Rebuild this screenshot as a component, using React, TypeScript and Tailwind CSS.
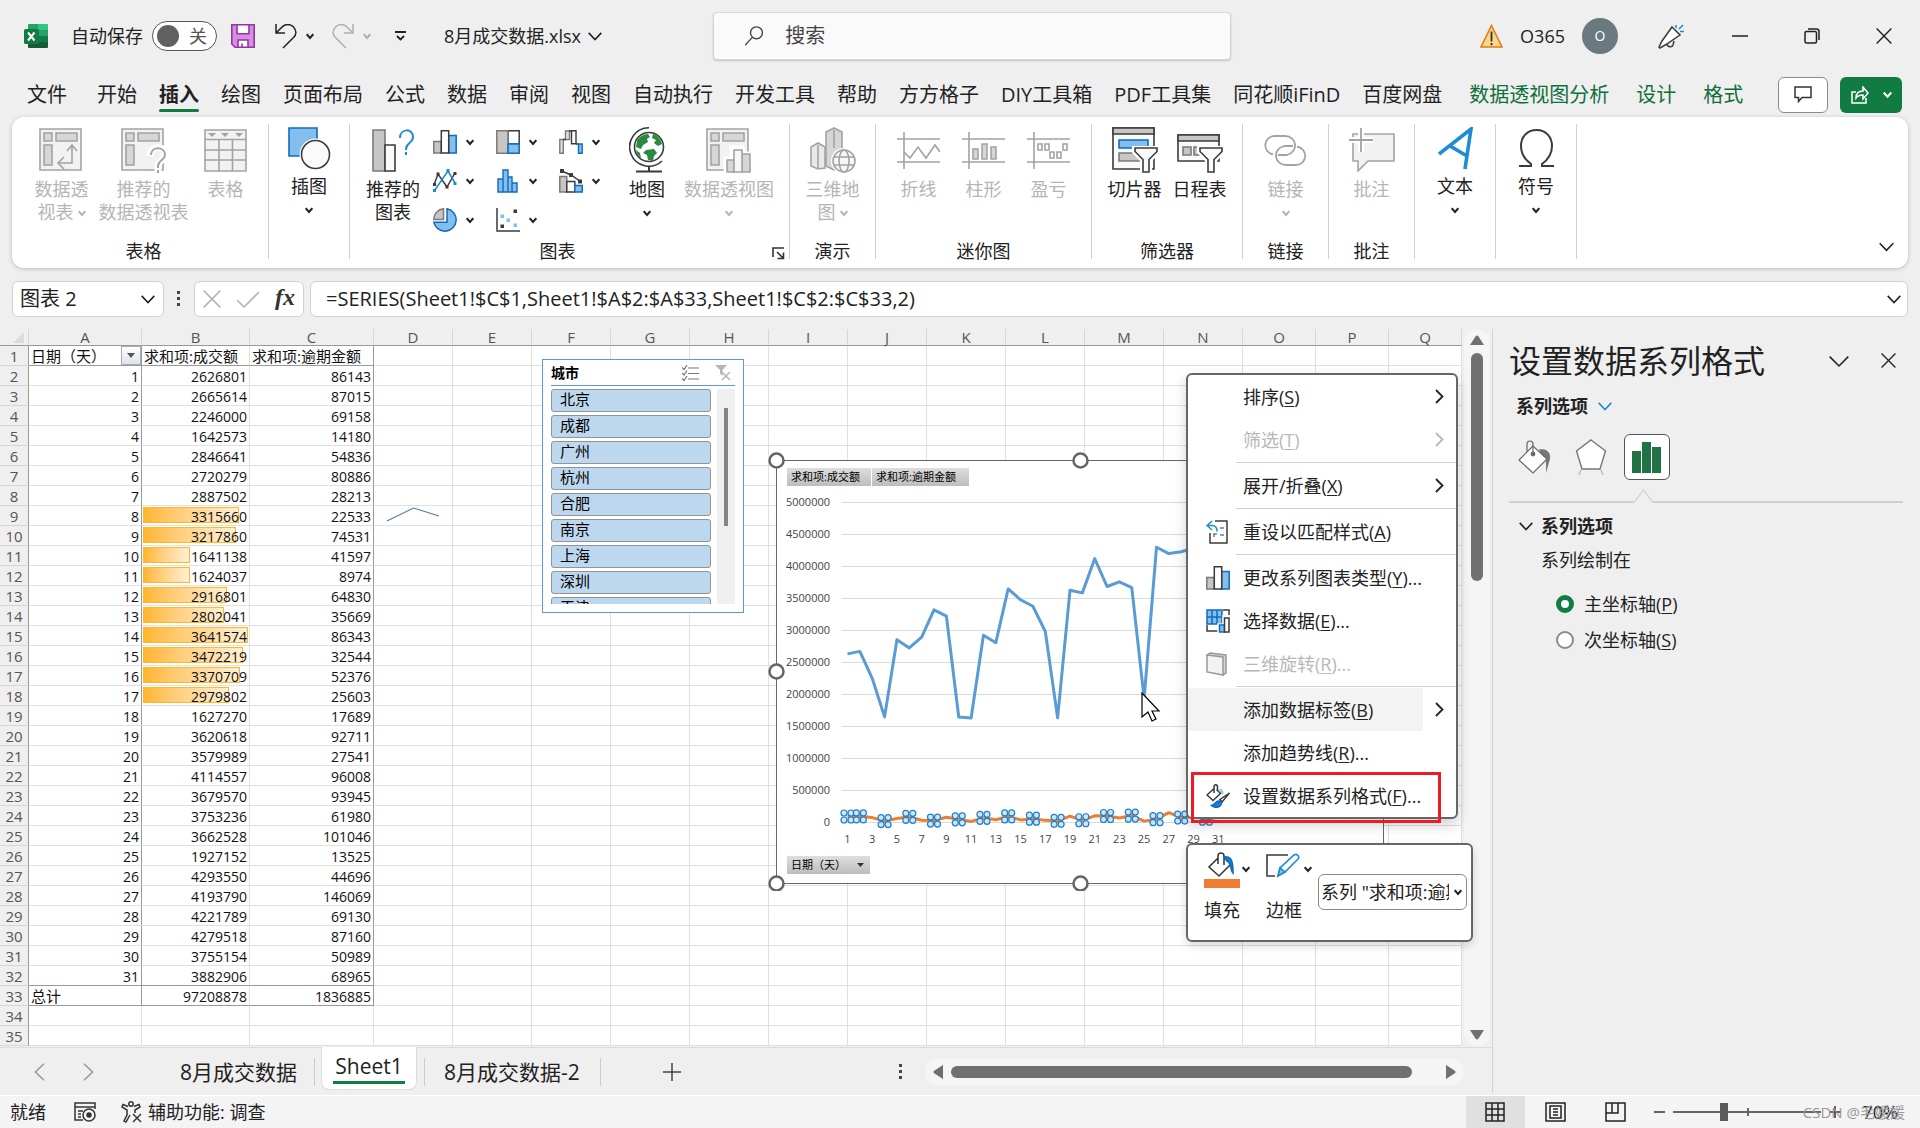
import { useState, type ReactNode } from "react";

const DEALS = [
  2626801, 2665614, 2246000, 1642573, 2846641, 2720279, 2887502, 3315660, 3217860, 1641138, 1624037,
  2916801, 2802041, 3641574, 3472219, 3370709, 2979802, 1627270, 3620618, 3579989, 4114557, 3679570,
  3753236, 3662528, 1927152, 4293550, 4193790, 4221789, 4279518, 3755154, 3882906,
];

const OVERDUE = [
  86143, 87015, 69158, 14180, 54836, 80886, 28213, 22533, 74531, 41597, 8974, 64830, 35669, 86343,
  32544, 52376, 25603, 17689, 92711, 27541, 96008, 93945, 61980, 101046, 13525, 44696, 146069, 69130,
  87160, 50989, 68965,
];

const COLUMNS = "ABCDEFGHIJKLMNOPQ".split("");
const CITIES = ["北京", "成都", "广州", "杭州", "合肥", "南京", "上海", "深圳", "天津"];

const TABS = [
  "文件", "开始", "插入", "绘图", "页面布局", "公式", "数据", "审阅", "视图", "自动执行", "开发工具",
  "帮助", "方方格子", "DIY工具箱", "PDF工具集", "同花顺iFinD", "百度网盘",
];
const CONTEXT_TABS = ["数据透视图分析", "设计", "格式"];

/* ---------- small shared icons ---------- */

function Chevron({ size = 8, className = "", width = 2 }: { size?: number; className?: string; width?: number }) {
  return (
    <svg
      width={size}
      height={size}
      viewBox={`0 0 ${size} ${size}`}
      fill="none"
      stroke="currentColor"
      strokeWidth={width}
      className={`shrink-0 ${className}`}
    >
      <path d={`M.7 ${size * 0.28} L${size / 2} ${size * 0.75} L${size - 0.7} ${size * 0.28}`} />
    </svg>
  );
}

function Cross({ size = 16, width = 1.4, className = "" }: { size?: number; width?: number; className?: string }) {
  return (
    <svg width={size} height={size} viewBox="0 0 16 16" stroke="currentColor" strokeWidth={width} className={className}>
      <path d="M.6.6 15.4 15.4M15.4.6.6 15.4" />
    </svg>
  );
}

function Dots() {
  return (
    <svg width="4" height="16" viewBox="0 0 4 16" fill="#444">
      <path d="M0 0h3v3H0zM0 6h3v3H0zM0 12h3v3H0z" />
    </svg>
  );
}

function ExcelLogo() {
  return (
    <svg width="24" height="24" viewBox="0 0 24 24">
      <path d="M5 0h10v6H4V1a1 1 0 0 1 1-1z" fill="#21a366" />
      <path d="M14 0h9a1 1 0 0 1 1 1v5H14z" fill="#33c481" />
      <path d="M4 6h10v6H4z" fill="#107c41" />
      <path d="M14 6h10v6H14z" fill="#21a366" />
      <path d="M4 12h10v12H5a1 1 0 0 1-1-1z" fill="#185c37" />
      <path d="M14 12h10v6H14z" fill="#107c41" />
      <path d="M14 18h10v5a1 1 0 0 1-1 1h-9z" fill="#185c37" />
      <rect x="0" y="5" width="15" height="15" rx="1.5" fill="#107c41" />
      <path d="M4 8.5 10.5 16.5M10.5 8.5 4 16.5" stroke="#fff" strokeWidth="2" />
    </svg>
  );
}

function SaveIcon() {
  return (
    <svg width="24" height="24" viewBox="0 0 24 24" stroke="#9b2fae" strokeWidth="1.6">
      <path d="M.8.8h22.4v22.4H4L.8 20z" fill="#d291dc" />
      <path d="M6 .8h12v9H6z" fill="#fff" />
      <path d="M7 23.2V16h10v7.2z" fill="#fff" />
      <path d="M11 19.5v3.7" />
    </svg>
  );
}

function UndoIcon({ flip = false }: { flip?: boolean }) {
  return (
    <svg width="22" height="25" viewBox="0 0 22 25" fill="none" stroke="currentColor" strokeWidth="1.5">
      {flip ? (
        <path d="M21 0v9h-9M21 9 15.5 3.5C12-.5 6.5-.2 3.5 3s-3.3 7.5 0 10.5L14 24" />
      ) : (
        <path d="M1 0v9h9M1 9l5.5-5.5C10-.5 15.5-.2 18.5 3s3.3 7.5 0 10.5L8 24" />
      )}
    </svg>
  );
}

/* ---------- ribbon drawings ---------- */

const G = "#a3a3a3";

function PivotIcon({ kind }: { kind: "arrow" | "ask" | "bars" }) {
  return (
    <svg width="46" height="45" viewBox="0 0 46 45" fill="none" stroke={G} strokeWidth="1.6">
      <path d="M1 1h41v41H1z" fill="#f2f2f2" />
      <path d="M5 5h8v8H5zM17 5h21v8H17zM5 17h8v20H5z" fill="#d6d6d6" />
      {kind === "arrow" && <path d="M33 18v17H20M28 23l5-6 5 6M25 29l-6 6 6 6" />}
      {kind === "ask" && (
        <>
          <path d="M29 28c1-12 17-10 15 0-1 4-7 5-7 10v6" stroke="#fff" strokeWidth="7" />
          <path d="M30 27c0-9 14-9 14 0 0 5-7 5-7 11v2M37 42v3" strokeWidth="2" />
        </>
      )}
      {kind === "bars" && (
        <>
          <path d="M19 44V30h6V19h12v6h9v20z" fill="#fff" stroke="#fff" strokeWidth="3" />
          <path d="M21 32h7v12h-7zM36 26h8v18h-8z" fill="#d6d6d6" />
          <path d="M28 22h8v22h-8z" fill="#f7f7f7" />
        </>
      )}
    </svg>
  );
}

function TableIcon() {
  return (
    <svg width="43" height="43" viewBox="0 0 43 43" fill="none" stroke={G} strokeWidth="1.6">
      <path d="M1 1h41v41H1z" fill="#f2f2f2" />
      <path d="M1 10.5h41M1 21h41M1 31h41M15 10v32M28.5 10v32" />
      <path d="M4 4h8l-4 4zM17 4h8l-4 4zM31 4h8l-4 4z" fill={G} stroke="none" />
    </svg>
  );
}

function ShapesIcon() {
  return (
    <svg width="43" height="43" viewBox="0 0 43 43" strokeWidth="1.6">
      <path d="M1 1h28v28H1z" fill="#83beec" stroke="#0f6cbd" />
      <circle cx="27.5" cy="27.5" r="16" fill="#fff" />
      <circle cx="27.5" cy="27.5" r="14" fill="#fafafa" stroke="#3b3b3b" />
    </svg>
  );
}

function SuggestChartIcon() {
  return (
    <svg width="43" height="43" viewBox="0 0 43 43" fill="none" strokeWidth="1.6">
      <path d="M1 1h12v41H1z" fill="#c8c6c4" stroke="#7a7a7a" />
      <path d="M13 16h10v26H13z" fill="#fafafa" stroke="#3b3b3b" />
      <path d="M28 9c0-10 13-10 13-1 0 6-7 6-7 12v1M34 23v3" stroke="#1e8bd4" strokeWidth="2" />
    </svg>
  );
}

function ColumnMini() {
  return (
    <svg width="24" height="24" viewBox="0 0 24 24" strokeWidth="1.5">
      <path d="M.8 11.5h7.5V23H.8z" fill="#c8c6c4" stroke="#7a7a7a" />
      <path d="M15.5 5.5h7.7V23h-7.7z" fill="#83beec" stroke="#0f6cbd" />
      <path d="M8.3.8h7.4V23H8.3z" fill="#fff" stroke="#3b3b3b" />
    </svg>
  );
}

const MINI_CHARTS: { name: string; icon: ReactNode }[] = [
  { name: "柱形图", icon: <ColumnMini /> },
  {
    name: "层次结构图",
    icon: (
      <svg width="24" height="24" viewBox="0 0 24 24" strokeWidth="1.5">
        <path d="M12 .8h11.2V14H12z" fill="#fff" stroke="#3b3b3b" />
        <path d="M.8.8H12v22.4H.8z" fill="#c8c6c4" stroke="#7a7a7a" />
        <path d="M12 14h11.2v9.2H12z" fill="#83beec" stroke="#0f6cbd" />
      </svg>
    ),
  },
  {
    name: "瀑布图",
    icon: (
      <svg width="24" height="24" viewBox="0 0 24 24" strokeWidth="1.4">
        <path d="M.8 9.5h3.5v13.7H.8zM6.5 1h4v8.5h-4z" fill="#e4e2e0" stroke="#7a7a7a" />
        <path d="M12.500 .8h4.500v13h-4.500z" fill="#fff" stroke="#3b3b3b" />
        <path d="M4 9.500h3M10 1h3M17 14h3" stroke="#3b3b3b" />
        <path d="M19.5 14h3.7v9.2h-3.7z" fill="#83beec" stroke="#0f6cbd" />
      </svg>
    ),
  },
  {
    name: "折线图",
    icon: (
      <svg width="24" height="24" viewBox="0 0 24 24" fill="none" strokeWidth="1.5">
        <path d="M1 16 5 5l9 13 8-14" stroke="#3b3b3b" />
        <path d="M1.5 21.5 15 2l7 12" stroke="#1e8bd4" />
        <path d="M0 14h3v3H0zM3.5 3.5h3v3h-3zM12.5 16.5h3v3h-3zM20.5 3h3v3h-3z" fill="#3b3b3b" />
        <path d="M0 20h3v3H0zM13.5 0h3v3h-3zM20.5 13h3v3h-3z" fill="#1e8bd4" />
      </svg>
    ),
  },
  {
    name: "统计图",
    icon: (
      <svg width="24" height="24" viewBox="0 0 24 24" fill="#83beec" stroke="#0f6cbd" strokeWidth="1.4">
        <path d="M2 10h5v13H2zM7 1h5v22H7zM12 8h4v15h-4zM16 14h5v9h-5z" />
      </svg>
    ),
  },
  {
    name: "组合图",
    icon: (
      <svg width="24" height="24" viewBox="0 0 24 24" strokeWidth="1.5">
        <path d="M.8 7.5h7V23h-7z" fill="#c8c6c4" stroke="#7a7a7a" />
        <path d="M7.8 12.5h8V23h-8z" fill="#fff" stroke="#3b3b3b" />
        <path d="M15.8 16.5h7.4V23h-7.4z" fill="#83beec" stroke="#0f6cbd" />
        <path d="M2.5 2 12 6l9.5 6.5" fill="none" stroke="#3b3b3b" />
        <path d="M1 0h4v4H1zM10 4h4v4h-4zM19 10.5h4v4h-4z" fill="#3b3b3b" />
      </svg>
    ),
  },
  {
    name: "饼图",
    icon: (
      <svg width="24" height="24" viewBox="0 0 24 24" strokeWidth="1.5">
        <path d="M10.5.8v10.7H.8A10.5 10.5 0 0 1 10.5.8z" fill="#c8c6c4" stroke="#7a7a7a" />
        <path d="M14 .8a11.3 11.3 0 1 1-13.2 13.4H14z" fill="#83beec" stroke="#0f6cbd" />
      </svg>
    ),
  },
  {
    name: "散点图",
    icon: (
      <svg width="24" height="24" viewBox="0 0 24 24">
        <path d="M1 0v23h23" fill="none" stroke="#3b3b3b" strokeWidth="1.5" />
        <path d="M17.5 1.5H21V5h-3.5zM4.5 16.5H8V20H4.500z" fill="#3b3b3b" />
        <path d="M4.5 6.500H8V10H4.5zM10.5 10.500H14V14h-3.500zM17.5 15.500H21V19h-3.500z" fill="#83beec" />
      </svg>
    ),
  },
];

function GlobeIcon() {
  return (
    <svg width="36" height="46" viewBox="0 0 36 46" fill="none" stroke="#3b3b3b" strokeWidth="1.6">
      <circle cx="20" cy="20" r="14.5" fill="#fff" />
      <path d="M20 .8A19.2 19.2 0 1 0 33 34" />
      <path d="M20 39v5M7 44.5h26" strokeWidth="2" />
      <g fill="#2b8a3e" stroke="none">
        <path d="M8 14c2-4 6-7 11-7l2 3-3 2 1 3-5 3-2 4-5-2z" />
        <path d="M24 7c4 1 8 5 9 10l-4 2-4-3 2-3-4-2z" />
        <path d="M17 23l8-1 3 4-3 3-1 5-5-1-1-5-4-2z" />
        <path d="M7 23l4 3 1 5c-3-2-5-5-5-8z" />
      </g>
    </svg>
  );
}

function Map3dIcon() {
  return (
    <svg width="46" height="46" viewBox="0 0 46 46" stroke={G} strokeWidth="1.6">
      <path d="M16 5l8-4 8 4v36l-8 2-8-4z" fill="#d6d6d6" />
      <path d="M1 20l7-4 7 4v21l-7 1-7-3z" fill="#e8e8e8" />
      <path d="M8 18v23M24 3v18" />
      <circle cx="34" cy="34" r="13" fill="#fff" stroke="none" />
      <circle cx="34" cy="34" r="11" fill="#f7f7f7" />
      <ellipse cx="34" cy="34" rx="5" ry="11" fill="none" />
      <path d="M24 30h20M24 38h20" />
    </svg>
  );
}

function SparkIcon({ kind }: { kind: "line" | "column" | "winloss" }) {
  return (
    <svg width="43" height="37" viewBox="0 0 43 37" fill="none" stroke={G} strokeWidth="1.6">
      <path d="M0 7h43M0 30h43M7 0v37" />
      {kind === "line" && <path d="M7 20l6 6 8-11 8 11 9-13 5 7" />}
      {kind === "column" && <path d="M11 17h5v10h-5zM20 12h5v15h-5zM29 15h5v12h-5z" fill="#d6d6d6" />}
      {kind === "winloss" && <path d="M11 12h4v6h-4zM18 12h4v6h-4zM36 12h4v6h-4zM23 20h4v6h-4zM30 20h4v6h-4z" />}
    </svg>
  );
}

function Funnel({ x, y }: { x: number; y: number }) {
  return (
    <g transform={`translate(${x} ${y})`}>
      <path d="M0 0h24v4l-8 8v13H8V12L0 4z" fill="#fff" stroke="#fff" strokeWidth="4" />
      <path d="M1 0h22v3.5l-8 8V24H9V11.5l-8-8z" fill="#fafafa" stroke="#3b3b3b" strokeWidth="1.6" />
    </g>
  );
}

function SlicerIcon() {
  return (
    <svg width="46" height="46" viewBox="0 0 46 46" strokeWidth="1.6">
      <path d="M1 1h41v41H1z" fill="#fafafa" stroke="#3b3b3b" />
      <path d="M1 1h41v6H1z" fill="#c8c6c4" stroke="#3b3b3b" />
      <path d="M7 13h29v8H7z" fill="#83beec" stroke="#0f6cbd" />
      <path d="M7 26h22v8H7z" fill="#c8c6c4" stroke="#7a7a7a" />
      <Funnel x={22} y={21} />
    </svg>
  );
}

function TimelineIcon() {
  return (
    <svg width="46" height="46" viewBox="0 0 46 46" strokeWidth="1.6">
      <path d="M1 8h41v26H1z" fill="#fafafa" stroke="#3b3b3b" />
      <path d="M1 8h41v6H1z" fill="#c8c6c4" stroke="#3b3b3b" />
      <path d="M6 20h8v8H6zM17 20h8v8h-8zM28 20h8v8h-8z" fill="#c8c6c4" stroke="#7a7a7a" />
      <Funnel x={22} y={21} />
    </svg>
  );
}

function LinkIcon() {
  return (
    <svg width="43" height="31" viewBox="0 0 43 31" fill="none" stroke={G} strokeWidth="1.8">
      <path d="M9 19.500C-2 17-1 1 11 1h10c12 0 14 16 2 19H14" />
      <path d="M33 11.500C45 14 43 30 32 30H22c-12 0-14-16-2-19h9" />
    </svg>
  );
}

function NoteIcon() {
  return (
    <svg width="46" height="44" viewBox="0 0 46 44" fill="none" stroke={G} strokeWidth="1.6">
      <path d="M4 6h41v27H19L9 43V33H4z" fill="#f2f2f2" />
      <path d="M0 12h24M12 0v24" stroke="#fff" strokeWidth="6" />
      <path d="M0 12h24M12 0v24" strokeWidth="1.8" />
    </svg>
  );
}

function LetterArtIcon() {
  return (
    <svg width="35" height="43" viewBox="0 0 35 43" fill="none" stroke="#1e8bd4" strokeWidth="3.6">
      <path d="M1 27 33 2 27 42M12 19l17 10" />
    </svg>
  );
}

function OmegaIcon() {
  return (
    <svg width="35" height="39" viewBox="0 0 35 39" fill="none" stroke="#3b3b3b" strokeWidth="2">
      <path d="M0 37h12v-2C5 30 2 24 2 17 2 8 8 1 17.5 1S33 8 33 17c0 7-3 13-10 18v2h12" />
    </svg>
  );
}

/* ---------- ribbon ---------- */

interface BigButtonProps {
  icon: ReactNode;
  lines: string[];
  width?: string;
  disabled?: boolean;
  arrow?: "below" | "inline";
  short?: boolean;
}

function BigButton({ icon, lines, width = "w-[65px]", disabled, arrow, short }: BigButtonProps) {
  return (
    <button
      disabled={disabled}
      className={`flex shrink-0 flex-col items-center ${width} ${disabled ? "text-[#b5b5b5]" : "text-[#222]"}`}
    >
      <span className={`flex items-center justify-center ${short ? "h-[53px]" : "h-14"}`}>{icon}</span>
      {lines.map((line, i) => (
        <span key={line} className="flex items-center gap-1 text-lg/[23px] whitespace-nowrap">
          {line}
          {arrow === "inline" && i === lines.length - 1 && <Chevron />}
        </span>
      ))}
      {arrow === "below" && <Chevron className="mt-2" />}
    </button>
  );
}

function Group({ label, width, children, launcher }: { label?: string; width: string; children: ReactNode; launcher?: boolean }) {
  return (
    <>
      <div className={`relative flex shrink-0 flex-col ${width}`}>
        <div className="flex flex-1 items-start justify-center pt-[5px]">{children}</div>
        {label && <div className={`pb-[5px] text-center text-lg/[24px] ${launcher ? "pr-6" : ""}`}>{label}</div>}
        {launcher && (
          <button aria-label="图表设置" className="absolute right-1 bottom-2">
            <svg width="13" height="13" viewBox="0 0 13 13" fill="none" stroke="#333" strokeWidth="1.6">
              <path d="M1 10V1h11M5 5l6 6M11.5 5.500v6h-6" />
            </svg>
          </button>
        )}
      </div>
      <div className="mt-[7px] mb-[9px] w-px shrink-0 bg-[#d1d1d1]" />
    </>
  );
}

function Ribbon() {
  return (
    <div className="relative mx-3 flex h-[151px] rounded-xl bg-white shadow-[0_1px_4px_rgba(0,0,0,0.22)]">
      <Group label="表格" width="w-[256px] pl-[7px]">
        <BigButton width="w-[82px]" icon={<PivotIcon kind="arrow" />} lines={["数据透", "视表"]} arrow="inline" disabled />
        <BigButton width="w-[82px]" icon={<PivotIcon kind="ask" />} lines={["推荐的", "数据透视表"]} disabled />
        <BigButton width="w-[82px]" icon={<TableIcon />} lines={["表格"]} disabled />
      </Group>
      <Group width="w-[80px]">
        <BigButton icon={<ShapesIcon />} lines={["插图"]} arrow="below" short />
      </Group>
      <Group label="图表" width="w-[439px]" launcher>
        <BigButton width="w-[80px]" icon={<SuggestChartIcon />} lines={["推荐的", "图表"]} />
        <div className="grid grid-cols-[63px_63px_63px]">
          {MINI_CHARTS.map((c) => (
            <button key={c.name} aria-label={c.name} className="flex h-[39px] items-center gap-[9px]">
              {c.icon}
              <Chevron />
            </button>
          ))}
        </div>
        <BigButton width="w-[50px]" icon={<GlobeIcon />} lines={["地图"]} arrow="below" />
        <BigButton width="w-[114px]" icon={<PivotIcon kind="bars" />} lines={["数据透视图"]} arrow="below" disabled />
      </Group>
      <Group label="演示" width="w-[85px]">
        <BigButton icon={<Map3dIcon />} lines={["三维地", "图"]} arrow="inline" disabled />
      </Group>
      <Group label="迷你图" width="w-[215px]">
        <BigButton icon={<SparkIcon kind="line" />} lines={["折线"]} disabled />
        <BigButton icon={<SparkIcon kind="column" />} lines={["柱形"]} disabled />
        <BigButton icon={<SparkIcon kind="winloss" />} lines={["盈亏"]} disabled />
      </Group>
      <Group label="筛选器" width="w-[150px]">
        <BigButton icon={<SlicerIcon />} lines={["切片器"]} />
        <BigButton icon={<TimelineIcon />} lines={["日程表"]} />
      </Group>
      <Group label="链接" width="w-[85px]">
        <BigButton icon={<LinkIcon />} lines={["链接"]} arrow="below" disabled />
      </Group>
      <Group label="批注" width="w-[85px]">
        <BigButton icon={<NoteIcon />} lines={["批注"]} disabled />
      </Group>
      <Group width="w-[80px]">
        <BigButton icon={<LetterArtIcon />} lines={["文本"]} arrow="below" short />
      </Group>
      <Group width="w-[80px]">
        <BigButton icon={<OmegaIcon />} lines={["符号"]} arrow="below" short />
      </Group>
      <button aria-label="折叠功能区" className="mt-auto mr-[14px] mb-[14px] ml-auto">
        <Chevron size={15} width={1.6} />
      </button>
    </div>
  );
}

/* ---------- title bar and tabs ---------- */

function TitleBar() {
  const [autosave, setAutosave] = useState(false);
  return (
    <header className="relative flex h-[72px] items-center pl-6 text-lg">
      <ExcelLogo />
      <span className="ml-[23px]">自动保存</span>
      <button
        role="switch"
        aria-checked={autosave}
        aria-label="自动保存"
        onClick={() => setAutosave(!autosave)}
        className="ml-[9px] flex h-[30px] w-[65px] items-center gap-[10px] rounded-full border border-[#555] bg-white pl-1"
      >
        <span className="h-[22px] w-[22px] rounded-full bg-[#616161]" />
        <span className="text-[#555]">关</span>
      </button>
      <button aria-label="保存" className="ml-[14px]"><SaveIcon /></button>
      <button aria-label="撤消" className="ml-5 flex items-center gap-[9px]">
        <UndoIcon />
        <Chevron />
      </button>
      <button aria-label="恢复" disabled className="ml-[18px] flex items-center gap-[9px] text-[#b0b0b0]">
        <UndoIcon flip />
        <Chevron />
      </button>
      <button aria-label="自定义快速访问工具栏" className="ml-6">
        <svg width="11" height="10" viewBox="0 0 11 10" fill="none" stroke="#222" strokeWidth="1.8">
          <path d="M0 1h11M2 5l3.5 3.5L9 5" />
        </svg>
      </button>
      <button className="ml-[38px] flex items-center gap-[7px]">
        8月成交数据.xlsx
        <Chevron size={14} width={1.6} />
      </button>

      {/* Search sits over the middle of the bar */}
      <label className="absolute top-3 left-[37.135%] flex h-12 w-[27%] items-center gap-[22px] rounded border border-[#d6d6d6] bg-[#fafafa] pl-[31px] shadow-[0_1px_2px_rgba(0,0,0,0.2)]">
        <svg width="20" height="22" viewBox="0 0 20 22" fill="none" stroke="#444" strokeWidth="1.5">
          <circle cx="12.5" cy="7.5" r="6.5" />
          <path d="M8 12.5 0 21" />
        </svg>
        <input placeholder="搜索" aria-label="搜索" className="w-full bg-transparent text-xl outline-none placeholder:text-[#444]" />
      </label>

      <div className="ml-auto flex items-center pr-7">
        <svg width="23" height="24" viewBox="0 0 23 24">
          <path d="M11.5 1.5 22 23H1z" fill="#fbd78b" stroke="#e07c1a" strokeWidth="1.6" />
          <path d="M11.5 7.5v10M11.5 19v2.2" stroke="#333" strokeWidth="1.8" />
        </svg>
        <span className="ml-[17px]">O365</span>
        <button aria-label="帐户" className="ml-[17px] h-9 w-9 rounded-full bg-[#69797e] text-sm text-white">O</button>
        <button aria-label="新增功能" className="ml-10">
          <svg width="26" height="25" viewBox="0 0 26 25" fill="none" stroke="#3b3b3b" strokeWidth="1.5">
            <path d="M14 3l8 8-14 9.5L2 24l-1-1 3-6z" fill="#fff" />
            <path d="M9 20c0 3 5 4 6 1l1-4" />
            <path d="M18 1v3M25 1l-4 4M22 7.5h4" stroke="#1e8bd4" />
          </svg>
        </button>
        <button aria-label="最小化" className="ml-12">
          <svg width="16" height="14" viewBox="0 0 16 14"><path d="M0 7h16" stroke="#222" strokeWidth="1.5" /></svg>
        </button>
        <button aria-label="还原" className="ml-[56px]">
          <svg width="16" height="16" viewBox="0 0 16 16" fill="none" stroke="#222" strokeWidth="1.5">
            <rect x="1" y="3.500" width="11.500" height="11.500" rx="1.5" />
            <path d="M4 1h8.500Q15 1 15 3.500V12" />
          </svg>
        </button>
        <button aria-label="关闭" className="ml-[56px]"><Cross /></button>
      </div>
    </header>
  );
}

function TabRow() {
  const [active, setActive] = useState("插入");
  return (
    <nav className="flex h-[45px] items-center pr-[18px] pl-[27px] text-xl">
      <div className="flex gap-[22px]">
        {TABS.map((t) => (
          <button
            key={t}
            onClick={() => setActive(t)}
            className={`relative h-[45px] whitespace-nowrap first:mr-2 ${active === t ? "font-bold" : ""}`}
          >
            {t}
            {active === t && <span className="absolute right-0 bottom-[5px] left-0 h-[3px] rounded-full bg-[#107c41]" />}
          </button>
        ))}
      </div>
      <div className="ml-[27px] flex gap-[27px] text-[#0e703a]">
        {CONTEXT_TABS.map((t) => (
          <button key={t} onClick={() => setActive(t)} className="whitespace-nowrap">{t}</button>
        ))}
      </div>
      <button aria-label="批注" className="ml-auto flex h-9 w-[50px] items-center justify-center rounded-md border border-[#8a8a8a] bg-white">
        <svg width="18" height="17" viewBox="0 0 18 17" fill="none" stroke="#333" strokeWidth="1.5">
          <path d="M1 1h16v10.5H8L4.5 15.5v-4H1z" />
        </svg>
      </button>
      <button aria-label="共享" className="ml-3 flex h-9 w-[62px] items-center justify-center gap-[14px] rounded-md bg-[#107c41] text-white">
        <svg width="18" height="18" viewBox="0 0 18 18" fill="none" stroke="#fff" strokeWidth="1.5">
          <path d="M5 6H1v11h14v-5" />
          <path d="M5 12c0-5 2-7 7-7V1l5 6-5 6V9c-3 0-5 0-7 3z" />
        </svg>
        <Chevron size={9} />
      </button>
    </nav>
  );
}

function FormulaBar() {
  return (
    <div className="mx-3 mt-[13px] mb-3 flex h-9 items-center text-xl">
      <div className="flex h-full w-[152px] items-center rounded-md border border-[#d1d1d1] bg-white pr-2 pl-[7px]">
        <input aria-label="名称框" defaultValue="图表 2" className="w-full min-w-0 outline-none" />
        <Chevron size={14} width={1.6} />
      </div>
      <div className="flex w-[30px] justify-center"><Dots /></div>
      <div className="flex h-full w-[110px] items-center justify-between rounded-md border border-[#d1d1d1] bg-white px-2">
        <button aria-label="取消" className="text-[#b5b5b5]"><Cross size={18} /></button>
        <button aria-label="输入">
          <svg width="24" height="17" viewBox="0 0 24 17" fill="none" stroke="#b5b5b5" strokeWidth="1.6"><path d="M1 9l7 7L23 1" /></svg>
        </button>
        <button aria-label="插入函数" className="pb-1 font-['Liberation_Serif',serif] text-2xl font-bold text-[#333] italic">fx</button>
      </div>
      <div className="ml-[6px] flex h-full flex-1 items-center rounded-md border border-[#d1d1d1] bg-white pr-1.5 pl-[15px]">
        <input
          aria-label="编辑栏"
          defaultValue="=SERIES(Sheet1!$C$1,Sheet1!$A$2:$A$33,Sheet1!$C$2:$C$33,2)"
          className="w-full outline-none"
        />
        <Chevron size={14} width={1.6} />
      </div>
    </div>
  );
}

/* ---------- worksheet ---------- */

function SheetRow({ n }: { n: number }) {
  const pivot = n <= 33;
  const darkBottom = n === 1 || n === 32 || n === 33;
  const bottom = darkBottom ? "border-b-[#999]" : "border-b-[#e0e0e0]";
  const side = pivot ? "border-r-[#999]" : "border-r-[#e0e0e0]";
  const day = n - 1;
  const isData = n >= 2 && n <= 32;
  const deal = DEALS[day - 1];
  const hasBar = isData && day >= 8 && day <= 17;

  return (
    <tr className="h-5">
      <th scope="row" className="border-r border-b border-r-[#999] border-b-[#d6d6d6] bg-[#efefef] pt-0.5 text-center text-[15px]/[17px] font-normal text-[#555]">
        {n}
      </th>
      <td className={`relative border-r border-b px-0.5 pt-0.5 ${bottom} ${side} ${isData ? "text-right" : "text-[15px]/[17px]"}`}>
        {n === 1 && "日期（天）"}
        {n === 1 && (
          <button aria-label="筛选日期" className="absolute top-0 right-0 flex h-[19px] w-5 items-center justify-center border border-[#a8adb5] bg-linear-to-b from-white to-[#dfe3ea]">
            <svg width="8" height="5" viewBox="0 0 8 5"><path d="M0 0h8L4 5z" fill="#555" /></svg>
          </button>
        )}
        {isData && day}
        {n === 33 && "总计"}
      </td>
      <td className={`relative border-r border-b border-r-[#e0e0e0] px-0.5 pt-0.5 ${bottom} ${n === 1 ? "text-[15px]/[17px]" : "text-right"}`}>
        {hasBar && (
          <span
            className="absolute top-px bottom-0.5 left-px border border-[#ffb628] bg-linear-to-r from-[#ffb628] to-[#fff0d4]"
            style={{ width: Math.round((deal / 3641574) * 105) }}
          />
        )}
        {n === 1 && "求和项:成交额"}
        {isData && <span className="relative">{deal}</span>}
        {n === 33 && "97208878"}
      </td>
      <td className={`border-r border-b px-0.5 pt-0.5 ${bottom} ${side} ${n === 1 ? "text-[15px]/[17px]" : "text-right"}`}>
        {n === 1 && "求和项:逾期金额"}
        {isData && OVERDUE[day - 1]}
        {n === 33 && "1836885"}
      </td>
      {COLUMNS.slice(3).map((c) => (
        <td key={c} className="border-r border-b border-r-[#e0e0e0] border-b-[#e0e0e0]">
          {c === "D" && n === 9 && (
            <svg width="78" height="19" viewBox="0 0 78 19" className="block">
              <path d="M13 15 39.5 2 65 10" fill="none" stroke="#4f7cac" strokeWidth="1.1" />
            </svg>
          )}
        </td>
      ))}
    </tr>
  );
}

function Sheet() {
  return (
    <table className="w-[1462px] table-fixed border-separate border-spacing-0 bg-white text-sm/[17px] text-[#111]">
      <colgroup>
        <col className="w-[29px]" />
        <col className="w-[113px]" />
        <col className="w-[108px]" />
        <col className="w-[124px]" />
        {COLUMNS.slice(3).map((c) => (
          <col key={c} className={c > "N" ? "w-[73px]" : "w-[79px]"} />
        ))}
      </colgroup>
      <thead>
        <tr className="h-[17px] bg-[#efefef]">
          <th className="border-r border-b border-r-[#d6d6d6] border-b-[#999] p-0">
            <svg width="11" height="11" viewBox="0 0 11 11" className="mr-1 ml-auto block"><path d="M11 0v11H0z" fill="#dcdcdc" /></svg>
          </th>
          {COLUMNS.map((c) => (
            <th key={c} scope="col" className="border-r border-b border-r-[#d6d6d6] border-b-[#999] p-0 text-[15px]/[16px] font-normal text-[#555]">
              {c}
            </th>
          ))}
        </tr>
      </thead>
      <tbody>
        {Array.from({ length: 35 }, (_, i) => (
          <SheetRow key={i} n={i + 1} />
        ))}
      </tbody>
    </table>
  );
}

function Slicer() {
  return (
    <section className="absolute top-[30px] left-[542px] h-[254px] w-[202px] border border-[#5b9bd5] bg-white px-2">
      <div className="flex h-[26px] items-center border-b border-[#5b9bd5] text-sm font-bold text-black">
        城市
        <svg width="17" height="16" viewBox="0 0 17 16" fill="none" stroke="#777" strokeWidth="1.2" className="ml-auto">
          <path d="M6 3h11M6 8.5h11M6 14h11M0 2.5l2 2L5 0M0 8l2 2 3-4.5M0 13.5l2 2L5 11" />
        </svg>
        <svg width="16" height="16" viewBox="0 0 16 16" fill="#b5b5b5" className="mr-1 ml-4">
          <path d="M0 0h12L7.5 5v6L5 8.500V5z" />
          <path d="M7 7l8 8M15 7l-8 8" stroke="#b5b5b5" strokeWidth="1.5" />
        </svg>
      </div>
      <div className="mt-[3px] flex h-[215px] justify-between overflow-hidden">
        <div className="flex w-40 flex-col gap-[3px]">
          {CITIES.map((c) => (
            <button key={c} className="h-[23px] shrink-0 rounded-[3px] border border-[#8f9499] bg-[#bdd7ee] pb-0.5 pl-2 text-left text-[15px]/[19px] text-black">
              {c}
            </button>
          ))}
        </div>
        <div className="flex w-[18px] justify-center bg-[#f0f0f0] pt-[19px]">
          <div className="h-[118px] w-1 bg-[#858585]" />
        </div>
      </div>
    </section>
  );
}

const px = (i: number) => 70.5 + i * 12.36;
const py = (v: number) => 361 - (v / 5000000) * 320;
const toPoints = (data: number[]) => data.map((v, i) => `${px(i)},${py(v)}`).join(" ");

function PivotChart() {
  const marked = OVERDUE.map((v, i) => ({ v, i })).filter(({ i }) => i === 0 || i % 2 === 1);
  return (
    <section className="absolute top-[131px] left-[776px] h-[424px] w-[608px] border border-[#666] bg-white text-[11px]/[16px] text-black">
      <div className="absolute top-[7px] left-[10px] flex gap-px">
        <button className="h-[18px] w-[84px] bg-linear-to-b from-[#dedede] to-[#bdbdbd] pl-1 text-left whitespace-nowrap">求和项:成交额</button>
        <button className="h-[18px] w-[97px] bg-linear-to-b from-[#dedede] to-[#bdbdbd] pl-1 text-left whitespace-nowrap">求和项:逾期金额</button>
      </div>
      <svg width="606" height="422" viewBox="0 0 606 422" fontSize="11" fill="#444">
        {Array.from({ length: 11 }, (_, k) => (
          <g key={k}>
            <path d={`M64.5 ${361.5 - k * 32}H460`} stroke="#d9d9d9" />
            <text x="53" y={365 - k * 32} textAnchor="end">{k * 500000}</text>
          </g>
        ))}
        {Array.from({ length: 16 }, (_, k) => (
          <text key={k} x={px(k * 2)} y="382" textAnchor="middle">{k * 2 + 1}</text>
        ))}
        <polyline points={toPoints(DEALS)} fill="none" stroke="#5b9bd5" strokeWidth="3" strokeLinejoin="round" />
        <polyline points={toPoints(OVERDUE)} fill="none" stroke="#ed7d31" strokeWidth="3" strokeLinejoin="round" />
        {marked.map(({ v, i }) =>
          [[-3.5, -3.5], [3.5, -3.5], [-3.5, 3.5], [3.5, 3.5]].map(([dx, dy]) => (
            <circle key={`${i}${dx}${dy}`} cx={px(i) + dx} cy={py(v) + dy} r="3" fill="#cfe6f7" stroke="#1e7fcb" strokeWidth="1.2" />
          ))
        )}
      </svg>
      <button className="absolute bottom-[9px] left-[10px] flex h-[18px] w-[83px] items-center justify-between bg-linear-to-b from-[#dedede] to-[#bdbdbd] pr-1.5 pl-1">
        日期（天）
        <svg width="7" height="4" viewBox="0 0 7 4"><path d="M0 0h7L3.5 4z" fill="#333" /></svg>
      </button>
      {/* Resize handles */}
      <svg width="624" height="440" viewBox="-9 -9 624 440" className="pointer-events-none absolute -top-[10px] -left-[10px]" fill="#fff" stroke="#666" strokeWidth="2.5">
        {[0, 304, 607].map((x) =>
          [0, 211, 423].map((y) => (x === 304 && y === 211 ? null : <circle key={`${x}-${y}`} cx={x + 0.5} cy={y + 0.5} r="7" />))
        )}
      </svg>
      {/* Mouse pointer */}
      <svg width="20" height="30" viewBox="0 0 20 30" className="pointer-events-none absolute top-[231px] left-[364px]">
        <path d="M1 1v24l6-5 4 9 4-2-4-8h7z" fill="#fff" stroke="#000" strokeWidth="1.2" />
      </svg>
    </section>
  );
}

/* ---------- context menu ---------- */

const PaintIcon = (
  <svg width="24" height="24" viewBox="0 0 24 24" fill="none" stroke="#3b3b3b" strokeWidth="1.5">
    <path d="M8 4.500 1 11l6 5.500 7.500-7-4-4M8 9V3c0-3 3.500-3 3.500 0v4" />
    <path d="M13.500 6c3 0 3 3 3 4" stroke="#83beec" strokeWidth="2" />
    <path d="M23.500 9 14 15.500l2 2.500z" fill="#fff" />
    <path d="M14 17c-5-1-4 4-8.500 4.500 4 3.500 10 1.500 10-3z" fill="#1e7fcb" stroke="#0f6cbd" />
  </svg>
);

const ResetIcon = (
  <svg width="22" height="24" viewBox="0 0 22 24" fill="none" stroke="#3b3b3b" strokeWidth="1.5">
    <path d="M9 1h12v22H4V13" fill="#fff" />
    <path d="M14 8h4M14 15h4M8 17V14h3" stroke="#7a7a7a" />
    <path d="M6 1 1 5.500 6 10M1 5.500h5c3 0 5 2 5 6" stroke="#1e8bd4" />
  </svg>
);

const SelectDataIcon = (
  <svg width="24" height="24" viewBox="0 0 24 24" fill="none" stroke="#0f6cbd" strokeWidth="1.5">
    <path d="M1 16v6h11M17 1h6v5" stroke="#3b3b3b" />
    <path d="M1 1h15v14H1z" fill="#83beec" />
    <path d="M1 8h15M6 1v14M11 1v14" />
    <path d="M12 23v-8h5V7h7v16z" fill="#fff" stroke="#fff" />
    <path d="M13.5 16h5v7h-5z" fill="#83beec" />
    <path d="M18.5 9H23v14h-4.500z" fill="#fff" stroke="#3b3b3b" />
  </svg>
);

const BoxIcon = (
  <svg width="21" height="24" viewBox="0 0 21 24" stroke="#999" strokeWidth="1.5">
    <path d="M1 3l3-2 16 2v18l-3 2z" fill="#d6d6d6" />
    <path d="M1 3l16 2v18L1 20z" fill="#f2f2f2" />
  </svg>
);

interface MenuItem {
  text: string;
  hotkey: string;
  more?: boolean;
  icon?: ReactNode;
  sub?: boolean;
  disabled?: boolean;
  hover?: boolean;
  divider?: boolean;
}

const MENU: MenuItem[] = [
  { text: "排序", hotkey: "S", sub: true },
  { text: "筛选", hotkey: "T", sub: true, disabled: true, divider: true },
  { text: "展开/折叠", hotkey: "X", sub: true, divider: true },
  { text: "重设以匹配样式", hotkey: "A", icon: ResetIcon, divider: true },
  { text: "更改系列图表类型", hotkey: "Y", more: true, icon: <ColumnMini /> },
  { text: "选择数据", hotkey: "E", more: true, icon: SelectDataIcon },
  { text: "三维旋转", hotkey: "R", more: true, icon: BoxIcon, disabled: true, divider: true },
  { text: "添加数据标签", hotkey: "B", sub: true, hover: true },
  { text: "添加趋势线", hotkey: "R", more: true },
  { text: "设置数据系列格式", hotkey: "F", more: true, icon: PaintIcon },
];

function ContextMenu() {
  return (
    <div role="menu" className="absolute top-11 left-[1186px] w-[272px] rounded-md border-2 border-[#666] bg-white text-lg shadow-[0_6px_14px_rgba(0,0,0,0.18)]">
      {MENU.map((m) => (
        <div key={m.text}>
          <button
            role="menuitem"
            disabled={m.disabled}
            className={`flex h-[43px] w-full items-center ${m.disabled ? "text-[#b8b8b8]" : "text-[#222]"}`}
          >
            <span className={`flex h-full w-[235px] items-center ${m.hover ? "bg-[#f3f3f3]" : ""}`}>
              <span className="flex w-[55px] shrink-0 pl-[18px]">{m.icon}</span>
              <span className="whitespace-nowrap">
                {m.text}(<u className="underline-offset-2">{m.hotkey}</u>){m.more && "..."}
              </span>
            </span>
            {m.sub && (
              <svg width="9" height="15" viewBox="0 0 9 15" fill="none" stroke="currentColor" strokeWidth="1.8" className="ml-3">
                <path d="M1 1l6.5 6.500L1 14" />
              </svg>
            )}
          </button>
          {m.divider && <div className="my-px ml-12 h-px bg-[#d0d0d0]" />}
        </div>
      ))}
      <div className="pointer-events-none absolute -bottom-[6px] left-[3px] h-[51px] w-[250px] border-3 border-[#ed1c24]" />
    </div>
  );
}

function MiniToolbar() {
  return (
    <div className="absolute top-[514px] left-[1186px] flex h-[99px] w-[287px] rounded-md border-2 border-[#666] bg-white pt-[5px] pl-4 text-lg shadow-[0_4px_10px_rgba(0,0,0,0.15)]">
      <button className="flex h-[74px] w-[62px] flex-col items-start">
        <span className="flex items-center gap-0.5">
          <svg width="36" height="38" viewBox="0 0 36 38" fill="none" stroke="#3b3b3b" strokeWidth="1.6">
            <path d="M14 8 5 17l10 9L27 14l-6-6M14 14V6c0-4 6-4 6 0v9" />
            <path d="M20 7c8-1 9 5 9 16-3-3-1-10-6-12z" fill="#1e7fcb" stroke="#0f6cbd" />
            <path d="M0 29h36v9H0z" fill="#ed7d31" stroke="none" />
          </svg>
          <Chevron />
        </span>
        <span className="mt-2">填充</span>
      </button>
      <button className="flex h-[74px] w-[52px] flex-col items-start">
        <span className="flex items-center gap-1">
          <svg width="34" height="38" viewBox="0 0 34 38" fill="none" stroke="#3b3b3b" strokeWidth="1.6">
            <path d="M22 5H1v21h8" />
            <path d="M12 26l2-8L28 5c3-2 6 2 4 4L19 22z" fill="#fff" stroke="#1e8bd4" />
            <path d="M12 26l2-8 5 4z" fill="#83beec" stroke="#1e8bd4" />
          </svg>
          <Chevron />
        </span>
        <span className="mt-2">边框</span>
      </button>
      <div className="relative mt-6 h-9 w-[149px]">
        <select aria-label="图表元素" className="h-full w-full appearance-none rounded-md border border-[#8a8a8a] bg-white pr-[17px] pl-0.5 whitespace-pre">
          <option>系列 "求和项:逾期金额"</option>
        </select>
        <Chevron className="pointer-events-none absolute top-[14px] right-[5px]" />
      </div>
    </div>
  );
}

function VerticalScroll() {
  return (
    <div className="ml-0.5 flex w-[26px] shrink-0 flex-col items-center rounded-full bg-[#f5f5f5] py-1.5">
      <svg width="14" height="10" viewBox="0 0 14 10" fill="#707070"><path d="M5.5 1.5Q7-.5 8.500 1.500L14 10H0z" /></svg>
      <div className="mt-2 h-[228px] w-3 rounded-full bg-[#707070]" />
      <svg width="14" height="10" viewBox="0 0 14 10" fill="#707070" className="mt-auto"><path d="M5.5 8.500Q7 10.500 8.500 8.500L14 0H0z" /></svg>
    </div>
  );
}

function SheetTabs() {
  return (
    <div className="flex h-12 items-center border-t border-[#dcdcdc] text-[21px]/[28px] text-[#222]">
      <button aria-label="上一张" className="ml-[31px] text-[#999]"><Chevron size={18} width={1.6} className="rotate-90" /></button>
      <button aria-label="下一张" className="ml-[30px] text-[#999]"><Chevron size={18} width={1.6} className="-rotate-90" /></button>
      <button className="ml-[83px] w-[135px] border-r border-[#ccc] text-left whitespace-nowrap">8月成交数据</button>
      <button className="-mt-[7px] ml-[6px] h-[43px] w-24 rounded-b-lg border-x border-b border-[#dcdcdc] bg-white px-[11px]">
        <span className="block border-b-3 border-[#107c41] pb-px">Sheet1</span>
      </button>
      <button className="ml-[7px] w-[177px] border-x border-[#ccc] pl-[19px] text-left whitespace-nowrap">8月成交数据-2</button>
      <button aria-label="新工作表" className="ml-[62px]">
        <svg width="18" height="18" viewBox="0 0 18 18" stroke="#444" strokeWidth="1.5"><path d="M0 9h18M9 0v18" /></svg>
      </button>
      <div className="mr-[22px] ml-auto"><Dots /></div>
      <div className="mr-7 flex h-[26px] w-[539px] items-center rounded-full bg-[#f5f5f5] px-2">
        <svg width="10" height="14" viewBox="0 0 10 14" fill="#707070"><path d="M1.5 5.500Q-.5 7 1.500 8.500L10 14V0z" /></svg>
        <div className="ml-2 h-3 w-[461px] rounded-full bg-[#707070]" />
        <svg width="10" height="14" viewBox="0 0 10 14" fill="#707070" className="ml-auto"><path d="M8.5 5.500Q10.500 7 8.500 8.500L0 14V0z" /></svg>
      </div>
    </div>
  );
}

/* ---------- format pane ---------- */

function AxisOption({ label, hotkey, checked, onSelect }: { label: string; hotkey: string; checked: boolean; onSelect: () => void }) {
  return (
    <label className="flex h-9 items-center gap-[10px]">
      <input
        type="radio"
        name="axis"
        checked={checked}
        onChange={onSelect}
        className="h-[18px] w-[18px] appearance-none rounded-full border-2 border-[#8a8a8a] bg-white checked:border-5 checked:border-[#107c41]"
      />
      <span>{label}(<u className="underline-offset-2">{hotkey}</u>)</span>
    </label>
  );
}

function FormatPane() {
  const [axis, setAxis] = useState("primary");
  return (
    <aside className="mb-0.5 w-[428px] shrink-0 border-l border-[#d1d1d1] pr-[17px] pl-4 text-lg">
      <div className="flex h-[63px] items-center">
        <h2 className="text-[32px]/[40px]">设置数据系列格式</h2>
        <button aria-label="任务窗格选项" className="ml-auto"><Chevron size={20} width={1.5} /></button>
        <button aria-label="关闭窗格" className="mr-[7px] ml-8"><Cross size={15} /></button>
      </div>
      <button className="flex h-7 items-center gap-[10px] pl-[7px] font-bold">
        系列选项
        <Chevron size={14} width={1.6} className="text-[#1e8bd4]" />
      </button>
      <div className="mt-[14px] flex h-[46px] items-center pl-[9px]">
        <button aria-label="填充与线条">
          <svg width="35" height="34" viewBox="0 0 35 34" fill="#fff" stroke="#666" strokeWidth="1.2">
            <path d="M21 9c8 0 12 3 11 10l-4 14c0-10 1-15-5-19z" fill="#777" stroke="none" />
            <path d="M15 6 1 20l14 13 14-14z" />
            <path d="M9 12V4c0-4 6-4 6 0v8" fill="none" />
            <circle cx="15" cy="14" r="1.8" fill="#666" />
          </svg>
        </button>
        <button aria-label="效果" className="ml-[22px]">
          <svg width="32" height="36" viewBox="0 0 32 36" fill="#fff" stroke="#777" strokeWidth="1.4">
            <path d="M16 1 30.5 12 25 30H7L1.500 12z" />
            <path d="M6 31l-2 5M26 31l2 5" stroke="#bbb" />
          </svg>
        </button>
        <button aria-label="系列选项" className="ml-[17px] flex h-[46px] w-[46px] items-center justify-center rounded-md border border-[#555] bg-white">
          <svg width="30" height="31" viewBox="0 0 30 31" fill="#217346"><path d="M0 9h9v22H0zM10 0h9v31h-9zM20 5h9v26h-9z" /></svg>
        </button>
      </div>
      <svg width="394" height="15" viewBox="0 0 394 15" fill="none" stroke="#cfcfcf" className="mt-[9px]">
        <path d="M0 13h125M144 13h250" strokeWidth="2" />
        <path d="M125 13.5 134.5 1l9.5 12.5" strokeWidth="1.2" />
      </svg>
      <button className="mt-2 flex h-7 items-center gap-2 pl-[10px] font-bold">
        <Chevron size={14} width={1.6} />
        系列选项
      </button>
      <fieldset className="mt-[6px] pl-8">
        <legend className="h-7">系列绘制在</legend>
        <div className="mt-3 pl-[15px]">
          <AxisOption label="主坐标轴" hotkey="P" checked={axis === "primary"} onSelect={() => setAxis("primary")} />
          <AxisOption label="次坐标轴" hotkey="S" checked={axis === "secondary"} onSelect={() => setAxis("secondary")} />
        </div>
      </fieldset>
    </aside>
  );
}

/* ---------- status bar ---------- */

function StatusBar() {
  const [zoom, setZoom] = useState(34);
  return (
    <footer className="relative flex h-[33px] items-center border-t border-white bg-[#f4f4f4] pr-[22px] pl-[10px] text-lg/[24px]">
      <span>就绪</span>
      <svg width="22" height="20" viewBox="0 0 22 20" fill="none" stroke="#333" strokeWidth="1.5" className="ml-7">
        <path d="M21 7V1H1v17h8M1 5h20M4 9h5M4 12h3M4 15h3" />
        <circle cx="15" cy="13" r="6" />
        <circle cx="15" cy="13" r="2" fill="#333" />
      </svg>
      <button className="ml-[25px] flex items-center gap-[5px]">
        <svg width="22" height="22" viewBox="0 0 22 22" fill="none" stroke="#333" strokeWidth="1.5">
          <circle cx="10" cy="3" r="2.2" />
          <path d="M7 5.5 2 3.5 1 6l5 3v5l-3 6 2 1 4-7M13 5.5l5-2 1 2.500-5 3v3" />
          <path d="M12 13l8 8M20 13l-8 8" />
        </svg>
        辅助功能: 调查
      </button>
      <div className="ml-auto flex h-full items-center">
        <button aria-label="普通" className="flex h-full w-[59px] items-center justify-center bg-[#e0e0e0]">
          <svg width="20" height="20" viewBox="0 0 20 20" fill="none" stroke="#222" strokeWidth="1.5"><path d="M1 1h18v18H1zM1 7h18M1 13h18M7 1v18M13 1v18" /></svg>
        </button>
        <button aria-label="页面布局" className="ml-5">
          <svg width="21" height="20" viewBox="0 0 21 20" fill="none" stroke="#222" strokeWidth="1.5"><path d="M1 1h19v18H1zM5 4h11v12H5zM8 7h5M8 10h5M8 13h5" /></svg>
        </button>
        <button aria-label="分页预览" className="ml-[39px]">
          <svg width="21" height="20" viewBox="0 0 21 20" fill="none" stroke="#222" strokeWidth="1.5"><path d="M1 1h19v18H1zM1 11h12V1M7 1v10" /></svg>
        </button>
        <button aria-label="缩小" className="ml-7"><svg width="11" height="12" viewBox="0 0 11 12"><path d="M0 6h11" stroke="#333" strokeWidth="1.5" /></svg></button>
        <div className="relative ml-2 flex h-5 w-[148px] items-center">
          <input
            type="range"
            aria-label="显示比例"
            value={zoom}
            onChange={(e) => setZoom(Number(e.target.value))}
            className="w-full appearance-none bg-transparent [&::-webkit-slider-runnable-track]:h-[2px] [&::-webkit-slider-runnable-track]:bg-[#666] [&::-webkit-slider-thumb]:-mt-2 [&::-webkit-slider-thumb]:h-[18px] [&::-webkit-slider-thumb]:w-2 [&::-webkit-slider-thumb]:appearance-none [&::-webkit-slider-thumb]:bg-[#5c5c5c]"
          />
          <span className="pointer-events-none absolute top-[6px] left-[74px] h-2 w-0.5 bg-[#666]" />
        </div>
        <button aria-label="放大" className="ml-2"><svg width="12" height="12" viewBox="0 0 12 12"><path d="M0 6h12M6 0v12" stroke="#333" strokeWidth="1.5" /></svg></button>
        <span className="ml-[22px]">70%</span>
      </div>
      <span className="pointer-events-none absolute right-[15px] bottom-1 text-[15px]/[24px] whitespace-nowrap text-[#999]">CSDN @毛媛媛</span>
    </footer>
  );
}

export default function App() {
  return (
    <div className="flex min-h-screen flex-col overflow-x-clip bg-[#efefef] font-['Open_Sans','Noto_Sans_CJK_SC',sans-serif] text-[#222]">
      <TitleBar />
      <TabRow />
      <Ribbon />
      <FormulaBar />
      <main className="flex flex-1">
        <div className="flex min-w-0 flex-1 flex-col">
          <div className="relative flex pb-px">
            <div className="min-w-0 overflow-x-clip"><Sheet /></div>
            <VerticalScroll />
            <Slicer />
            <PivotChart />
            <ContextMenu />
            <MiniToolbar />
          </div>
          <SheetTabs />
        </div>
        <FormatPane />
      </main>
      <StatusBar />
    </div>
  );
}
